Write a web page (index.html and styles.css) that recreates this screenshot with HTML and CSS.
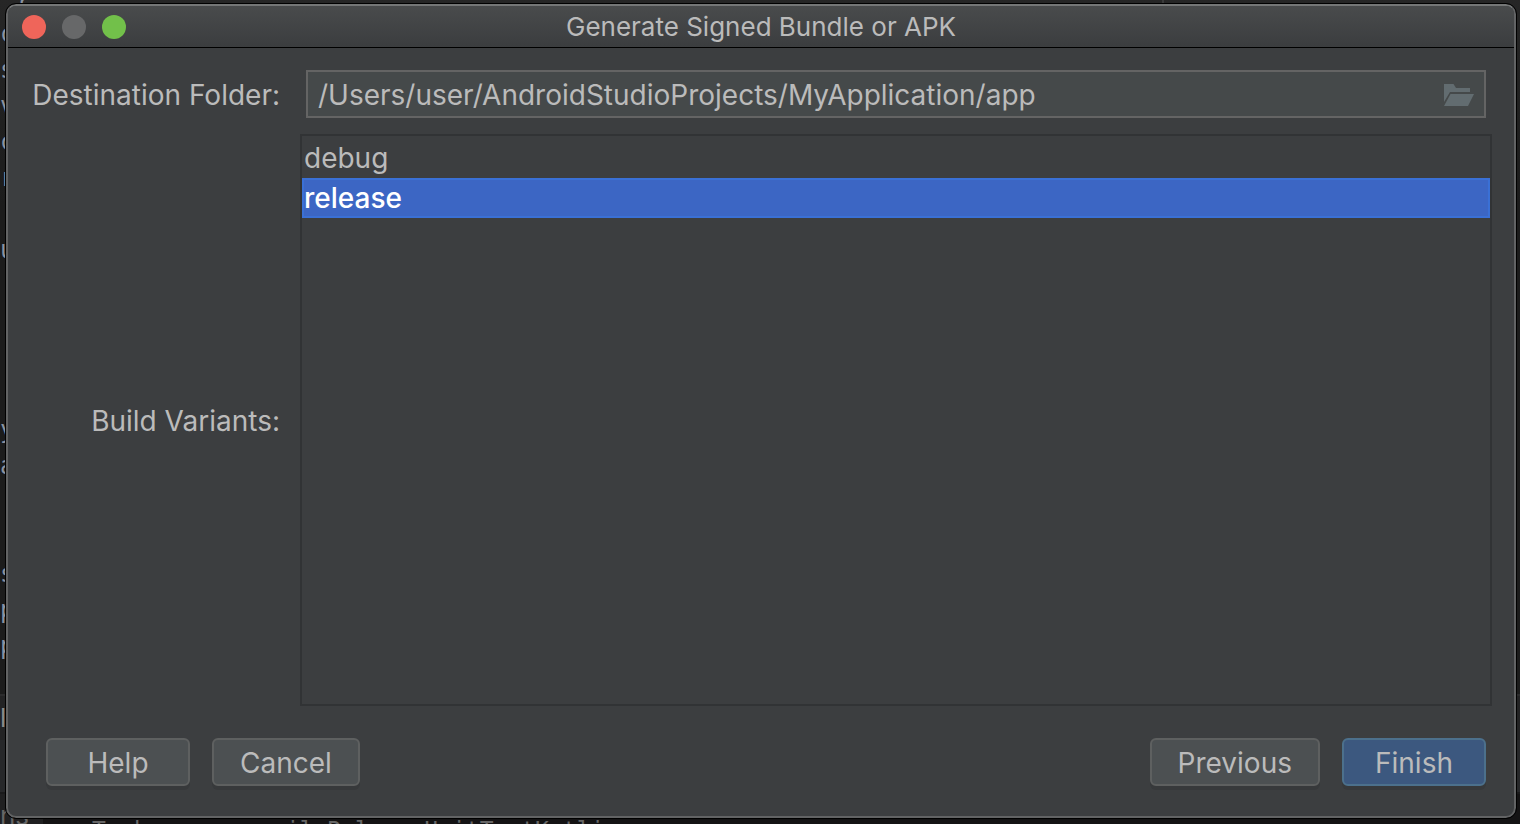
FILE: index.html
```html
<!DOCTYPE html>
<html lang="en">
<head>
<meta charset="utf-8">
<title>Generate Signed Bundle or APK</title>
<link rel="stylesheet" href="styles.css">
</head>
<body>
<div class="backdrop" aria-hidden="true">
<pre class="code"> }
c
s
v
c
r

u




y
a


s
p
p</pre>
<div class="split"></div>
<div class="tool-window">
<div class="tool-title">l</div>
<div class="tool-bar"></div>
<div class="tool-output"><span class="tool-tab">ns</span><span class="task">Task :app:compileReleaseUnitTestKotlin</span></div>
</div>
</div>
<main class="dialog">
  <header class="titlebar">
    <div class="lights">
      <button class="light close" type="button" aria-label="Close"></button>
      <button class="light minimize" type="button" aria-label="Minimize" disabled></button>
      <button class="light zoom" type="button" aria-label="Zoom"></button>
    </div>
    <h1 class="title">Generate Signed Bundle or APK</h1>
  </header>
  <form class="content">
    <div class="fields">
      <label class="label" for="folder">Destination Folder:</label>
      <div class="path">
        <input class="path-input" id="folder" type="text" value="/Users/user/AndroidStudioProjects/MyApplication/app">
        <button class="browse" type="button" aria-label="Browse">
          <svg width="30" height="22" viewBox="0 0 30 22" fill="#626c70"><path d="M0 0h9.500l2.500 4h14v4H6L0 18z"/><path d="M6.500 10H30l-6 12H0z"/></svg>
        </button>
      </div>
      <label class="label" for="variants">Build Variants:</label>
      <select class="variants" id="variants" size="2">
        <option class="variant">debug</option>
        <option class="variant" selected>release</option>
      </select>
    </div>
    <footer class="actions">
      <button class="button" type="button">Help</button>
      <button class="button" type="button">Cancel</button>
      <button class="button previous" type="button">Previous</button>
      <button class="button primary" type="submit">Finish</button>
    </footer>
  </form>
</main>
</body>
</html>
```
FILE: styles.css
```css
* {
  box-sizing: border-box;
}

body {
  margin: 0;
  min-height: 100vh;
  display: flex;
  padding: 4px 4px 6px 6px;
  background: #1e1e1f;
  color: #bbbbbb;
  color-scheme: dark;
  font: 26px/32px Inter, sans-serif;
}

.backdrop {
  position: absolute;
  inset: 0;
  overflow: hidden;
  background: linear-gradient(#262626, #1c1c1c 25%, #1c1c1c);
}

.code {
  position: absolute;
  top: -20px;
  left: 0;
  margin: 0;
  color: #8a93a2;
  font: 24px/36px "DejaVu Sans Mono", monospace;
}

.split {
  position: absolute;
  top: 0;
  left: 1162px;
  width: 2px;
  height: 4px;
  background: #3a3a3a;
}

.tool-window {
  position: absolute;
  inset: auto 0 0 0;
  height: 130px;
  display: flex;
  flex-direction: column;
  background: #141314;
}

.tool-title {
  height: 46px;
  border-top: 2px solid #2c2c2d;
  background: #232324;
  color: #8a8a8a;
  line-height: 44px;
}

.tool-bar {
  height: 54px;
  border-bottom: 2px solid #1a1a1b;
  background: #27282a;
}

.tool-output {
  display: flex;
  gap: 49px;
  height: 30px;
  color: #666666;
  white-space: nowrap;
}

.tool-tab {
  width: 43px;
  background: #202021;
  line-height: 44px;
}

.task {
  padding-top: 20px;
  font-family: "DejaVu Sans Mono", monospace;
  font-size: 23px;
}

.dialog {
  position: relative;
  flex: 1;
  display: flex;
  flex-direction: column;
  border: 2px solid #626364;
  border-top-color: #757777;
  border-radius: 10px;
  outline: 1px solid #000000;
  background: #3c3e40;
  overflow: hidden;
}

.titlebar {
  display: grid;
  grid-template-columns: 1fr auto 1fr;
  align-items: center;
  height: 42px;
  padding: 0 14px;
  border-bottom: 1px solid #000000;
  background: linear-gradient(#494b4c, #3b3d3f);
}

.lights {
  display: flex;
  gap: 16px;
}

.light {
  width: 24px;
  height: 24px;
  padding: 0;
  border: 0;
  border-radius: 50%;
}

.close {
  background: #ef655a;
}

.minimize {
  background: #676869;
}

.zoom {
  background: #72c04a;
}

.title {
  margin: 0;
  font-size: 26px;
  font-weight: 400;
}

.content {
  flex: 1;
  display: flex;
  flex-direction: column;
  gap: 32px;
  padding: 22px 22px 30px;
  font-size: 28px;
}

.fields {
  flex: 1;
  display: grid;
  grid-template-columns: minmax(250px, auto) 1fr;
  grid-template-rows: auto 1fr;
  gap: 16px 20px;
  align-items: center;
}

.label {
  padding-top: 2px;
  text-align: right;
}

.path {
  display: flex;
  align-items: center;
  height: 48px;
  margin: 0 6px;
  padding: 2px 10px 0;
  border: 2px solid #646464;
  background: #45494a;
}

.path-input {
  flex: 1;
  min-width: 0;
  padding: 0;
  border: 0;
  outline: 0;
  background: transparent;
  color: inherit;
  font: inherit;
}

.browse {
  display: flex;
  padding: 0;
  border: 0;
  background: none;
}

.variants {
  align-self: stretch;
  width: 100%;
  height: 100%;
  padding: 2px 0;
  border: 2px solid #313335;
  border-radius: 0;
  outline: 0;
  background: #3c3e40;
  color: #bbbbbb;
  font: inherit;
  overflow: hidden;
}

.variant {
  height: 40px;
  padding: 3px 2px;
}

.variant:checked {
  background: linear-gradient(#3c66c4, #3c66c4);
  box-shadow: inset 0 0 0 2px #3a70d6;
  -webkit-text-fill-color: #ffffff;
  font-weight: 500;
}

.actions {
  display: flex;
  gap: 22px;
  padding: 0 6px 0 16px;
}

.button {
  min-width: 144px;
  height: 48px;
  padding: 2px 26px 0;
  border: 2px solid #5e6060;
  border-radius: 6px;
  background: #4c5052;
  box-shadow: 0 4px 0 #37393b;
  color: inherit;
  font: inherit;
}

.previous {
  margin-left: auto;
}

.primary {
  border-color: #4c708c;
  background: #3c587f;
}
```
